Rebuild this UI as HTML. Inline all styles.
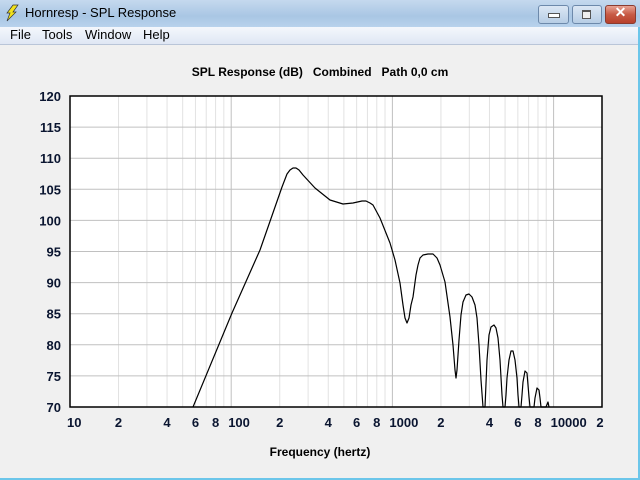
<!DOCTYPE html>
<html><head><meta charset="utf-8"><style>
body{margin:0;width:640px;height:480px;overflow:hidden;font-family:"Liberation Sans",sans-serif;background:#f0f0f0;position:relative}
#tb{position:absolute;left:0;top:0;width:640px;height:27px;background:linear-gradient(#c5d9ee,#a9c6e4 60%,#b8d2ec);}
#tb .t{position:absolute;left:25px;top:5px;font-size:13px;color:#000}
#menu{position:absolute;left:0;top:27px;width:640px;height:17px;background:linear-gradient(#f4f7fc,#dfe7f4);border-bottom:1px solid #b9c5d8;font-size:13px}
#menu span{position:absolute;top:0}
.btn{position:absolute;top:5px;height:17px;border:1px solid #6d89ab;border-radius:3px;background:linear-gradient(#dbe7f4,#b7cde5)}
</style></head><body>
<div id="tb">
<svg style="position:absolute;left:5px;top:4px" width="14" height="18"><polygon points="8,1 13,1 8,8 11,8 2,17 5,9 2,9" fill="#f2e21c" stroke="#333" stroke-width="0.7"/></svg>
<div class="t">Hornresp - SPL Response</div>
<div class="btn" style="left:538px;width:29px"><div style="position:absolute;left:9px;top:7px;width:10px;height:3px;background:#fff;border:1px solid #555"></div></div>
<div class="btn" style="left:572px;width:28px"><div style="position:absolute;left:9px;top:4px;width:7px;height:6px;border:1px solid #555;border-top-width:2px;background:#eee"></div></div>
<div class="btn" style="left:605px;width:29px;border-color:#8a3b30;background:linear-gradient(#e8a293,#c75a45 50%,#b8402c)"><div style="position:absolute;left:0;top:-2px;width:29px;text-align:center;color:#fff;font-weight:bold;font-size:14px">✕</div></div>
</div>
<div id="menu"><span style="left:10px">File</span><span style="left:42px">Tools</span><span style="left:85px">Window</span><span style="left:143px">Help</span></div>
<div style="position:absolute;right:0;top:27px;width:2px;height:453px;background:#6cc6ea"></div>
<div style="position:absolute;left:0;bottom:0;width:640px;height:2px;background:#6cc6ea"></div>
<svg id="p" style="position:absolute;left:0;top:0" width="640" height="480" font-family="Liberation Sans, sans-serif" font-weight="bold" font-size="13">
<text x="320" y="76" text-anchor="middle" font-size="12" fill="#000" style="white-space:pre" xml:space="preserve">SPL Response (dB)   Combined   Path 0,0 cm</text>
<rect x="70" y="96" width="532" height="311" fill="#fff"/>
<g id="g"></g>
<polyline fill="none" stroke="#000" stroke-width="1.2" stroke-linejoin="round" points="193,407 232,313 260,250 282,187 287,174 290,170 293,168 296,168 299,170 303,175 315,188 330,200 343,204 353,203 362,201 366,201 370,203 373,205 380,218 390,243 395,260 400,283 403,305 405,318 407,323 409,318 411,305 413,297 416,275 418,265 420,258 423,255 428,254 433,254 437,258 440,265 445,282 450,317 453,345 455,370 456,378 457,370 459,340 461,315 463,302 466,295 469,294 472,297 475,305 477,318 479,345 481,380 483,407 485,407 487,360 489,335 491,327 494,325 496,328 498,338 500,360 502,395 503,407 505,407 506,395 507,378 509,360 511,351 513,351 515,360 517,378 518,395 519,407 521,407 522,395 523,382 525,371 527,373 528,385 529,397 530,407 534,407 535,398 537,388 539,390 540,398 541,407 546,407 548,402 549,407"/>
<rect x="70" y="96" width="532" height="311" fill="none" stroke="#000" stroke-width="1.5"/>
<text x="320" y="456" text-anchor="middle" font-size="12">Frequency (hertz)</text>
<g id="l" fill="#0a1530"></g>
</svg>
<script>
var g=document.getElementById('g'),l=document.getElementById('l'),s='',t='';
var D=161.2;
for(var d=0;d<4;d++){for(var m=1;m<10;m++){var f=Math.pow(10,d+1)*m;if(f>=20000)break;var x=70+D*Math.log10(f/10);
if(m>1)s+='<line x1="'+x+'" y1="96" x2="'+x+'" y2="407" stroke="#e2e2e2"/>';
if(m==1&&d>0)s+='<line x1="'+x+'" y1="96" x2="'+x+'" y2="407" stroke="#c0c0c0"/>';
if(m==1)t+='<text x="'+(x-3)+'" y="427">'+f+'</text>';else if(m%2==0)t+='<text x="'+x+'" y="427" text-anchor="middle">'+m+'</text>';}}
t+='<text x="600" y="427" text-anchor="middle">2</text>';
for(var i=0;i<=10;i++){var y=96+i*31.1;if(i>0&&i<10)s+='<line x1="70" y1="'+y+'" x2="602" y2="'+y+'" stroke="#c0c0c0"/>';t+='<text x="61" y="'+(y+5)+'" text-anchor="end">'+(120-5*i)+'</text>';}
g.innerHTML=s;l.innerHTML=t;
</script>
</body></html>
